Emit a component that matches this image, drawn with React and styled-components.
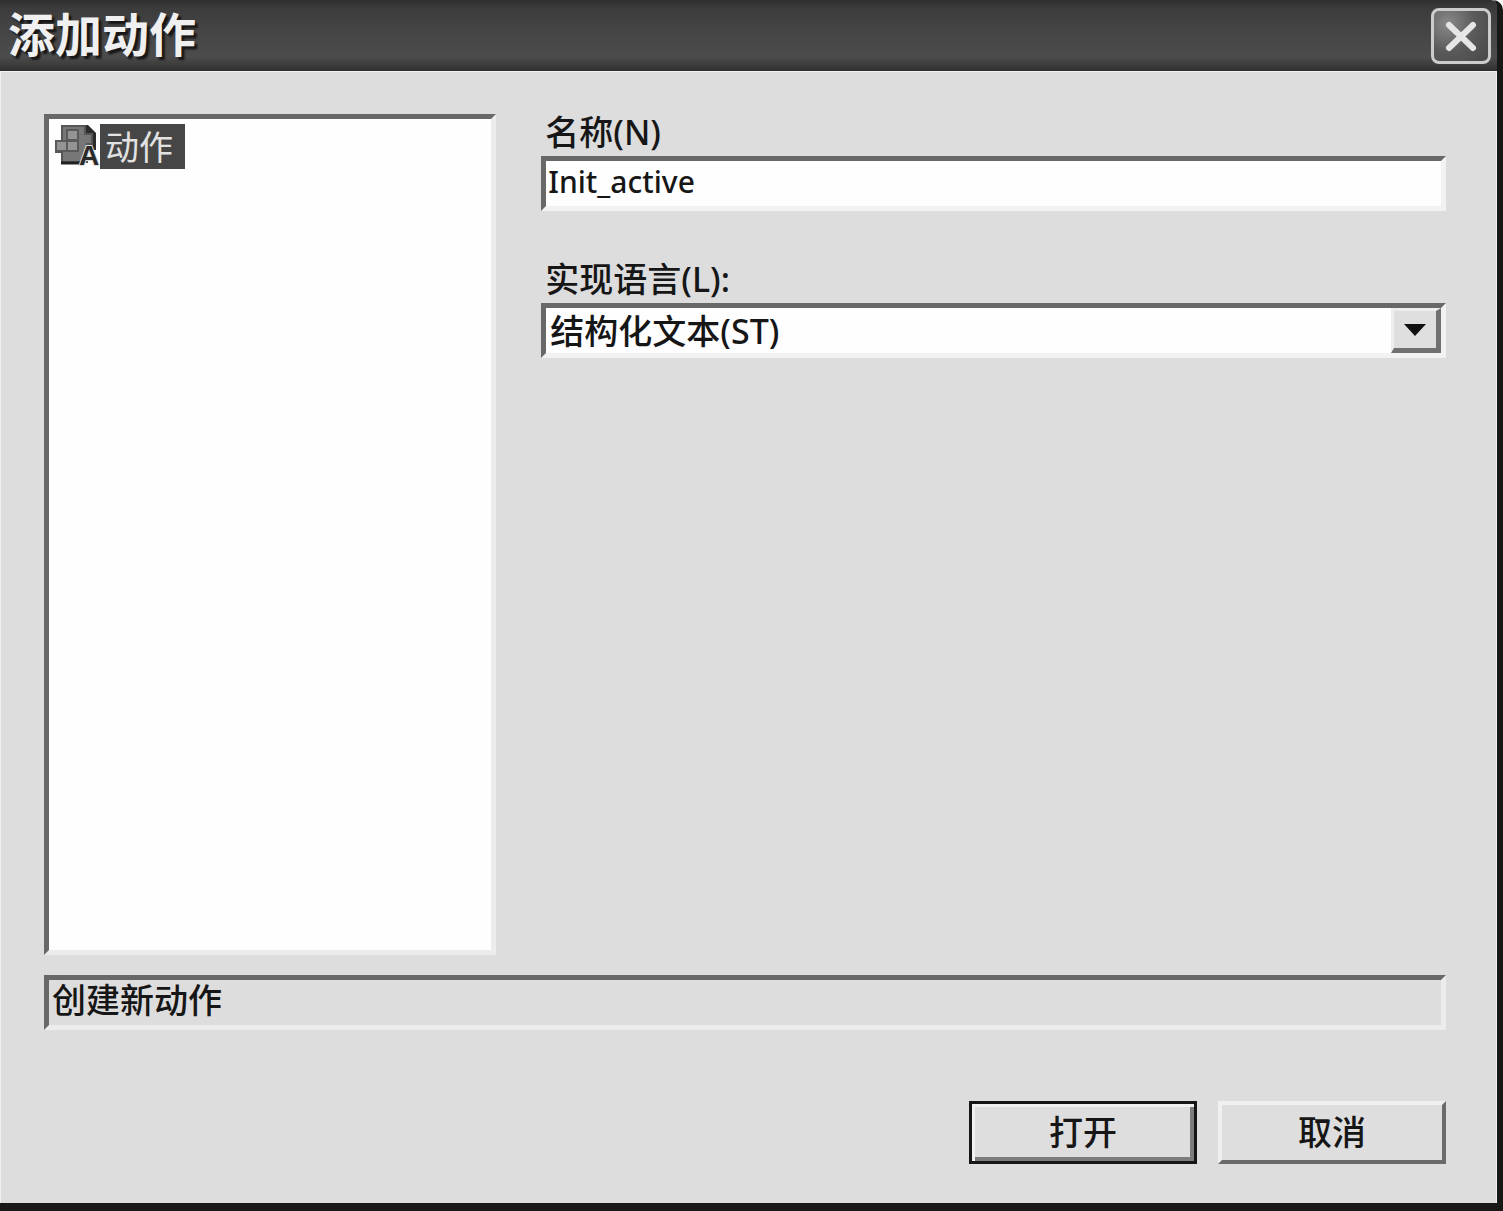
import React, {useState} from "react";
import styled, {createGlobalStyle} from "styled-components";


export default function App(){
    const [name, setName] = useState("Init_active");
    const [language, setLanguage] = useState("st");

    return(
        <>
            <GlobalStyle/>
            <Window>
                <TitleBar>
                    <h1>添加动作</h1>
                    <CloseBtn type="button" aria-label="关闭">
                        <svg width="34" height="32" viewBox="0 0 34 32" aria-hidden="true">
                            <path d="M5 5 L29 28 M29 5 L5 28" stroke="#e6e6e6" strokeWidth="6" strokeLinecap="round"/>
                        </svg>
                    </CloseBtn>
                </TitleBar>

                <Content>
                    <Main>
                        <Tree>
                            <TreeItem>
                                <ActionIcon/>
                                <TreeLabel type="button">动作</TreeLabel>
                            </TreeItem>
                        </Tree>

                        <Form>
                            <Field>
                                <label htmlFor="name">名称(N)</label>
                                <TextInput id="name" value={name} onChange={(e)=>setName(e.target.value)}/>
                            </Field>
                            <Field>
                                <label htmlFor="language">实现语言(L):</label>
                                <SelectWrap>
                                    <Select id="language" value={language} onChange={(e)=>setLanguage(e.target.value)}>
                                        <option value="st">结构化文本(ST)</option>
                                    </Select>
                                    <Arrow>
                                        <svg width="22" height="12" viewBox="0 0 22 12" aria-hidden="true">
                                            <path d="M0 0 H22 L11 12 Z" fill="#111111"/>
                                        </svg>
                                    </Arrow>
                                </SelectWrap>
                            </Field>
                        </Form>
                    </Main>

                    <Status>创建新动作</Status>

                    <ButtonRow>
                        <Button type="submit" $primary>打开</Button>
                        <Button type="button">取消</Button>
                    </ButtonRow>
                </Content>
            </Window>
        </>
    )
}

function ActionIcon(){
    return(
        <svg width="46" height="52" viewBox="0 0 46 52" aria-hidden="true">
            <path d="M31 1 H34 L42 9 V26 H37 V14 H31 Z" fill="#2b2b2b"/>
            <path d="M8 2 H31 V10 H38 V20 H33 V38 H8 V28 H2 V17 H8 Z" fill="#777777" stroke="#565656" strokeWidth="2"/>
            <path d="M7 39 H26" stroke="#222222" strokeWidth="3"/>
            <path d="M12 5 V16 H1 V28 H25 V5 Z" fill="#5a5a5a"/>
            <rect x="14" y="7" width="9" height="8" fill="#949494"/>
            <rect x="3" y="18" width="9" height="8" fill="#949494"/>
            <rect x="14" y="18" width="9" height="8" fill="#949494"/>
            <text x="35" y="41" textAnchor="middle">A</text>
        </svg>
    )
}


const GlobalStyle = createGlobalStyle`
    *{
        box-sizing: border-box;
    }
    body{
        margin: 0;
        background: #ffffff;
        color: #161616;
        font-family: "Noto Sans", "Noto Sans CJK SC", sans-serif;
        font-size: 34px;
    }
    button, input, select{
        font: inherit;
        color: inherit;
    }
`

const Window = styled.div`
    min-height: 100vh;
    display: flex;
    flex-direction: column;
    border: solid #181818;
    border-width: 0 6px 8px 0;
    border-top-right-radius: 10px;
    background: #dddddd;
`

const TitleBar = styled.header`
    height: 71px;
    padding: 0 6px 0 8px;
    display: flex;
    align-items: center;
    justify-content: space-between;
    background: linear-gradient(#303030 0%, #3c3c3c 12%, #444444 40%, #4c4c4c 80%, #303030 100%);
    border-top-right-radius: 6px;
    h1{
        margin: 0;
        padding-bottom: 4px;
        font-size: 47px;
        line-height: 64px;
        font-weight: 700;
        color: #f0f0f0;
        text-shadow: 3px 3px 2px #161616;
    }
`

const CloseBtn = styled.button`
    width: 60px;
    height: 56px;
    padding: 0;
    display: flex;
    align-items: center;
    justify-content: center;
    background: radial-gradient(circle at 25% 25%, #8a8a8a, #5a5a5a 50%, #484848);
    border: 3px solid #cccccc;
    border-radius: 8px;
`

const Content = styled.main`
    flex: 1;
    padding: 43px 51px 39px 44px;
    display: flex;
    flex-direction: column;
    box-shadow: inset 1px 1px 0 #f0f0f0, inset -1px 0 0 #f0f0f0;
`

const Main = styled.div`
    flex: 1;
    display: grid;
    grid-template-columns: 1fr 2fr;
    gap: 45px;
`

const Tree = styled.ul`
    margin: 0;
    padding: 5px;
    list-style: none;
    background: #fefefe;
    border: 5px solid;
    border-color: #686868 #ececec #ececec #686868;
`

const TreeItem = styled.li`
    display: flex;
    align-items: flex-start;
    text{
        font-family: "Liberation Sans", sans-serif;
        font-size: 28px;
        font-weight: 700;
        fill: #2a2a2a;
        stroke: #dddddd;
        stroke-width: 2px;
        paint-order: stroke;
    }
`

const TreeLabel = styled.button`
    height: 45px;
    padding: 0 12px 0 5px;
    border: none;
    background: #464646;
    && {
        color: #e2e2e2;
        line-height: 44px;
    }
`

const Form = styled.form`
    min-width: 0;
    display: flex;
    flex-direction: column;
    gap: 50px;
`

const Field = styled.div`
    display: flex;
    flex-direction: column;
    gap: 6px;
    label{
        padding-left: 4px;
        line-height: 36px;
        font-weight: 500;
    }
`

const TextInput = styled.input`
    width: 100%;
    height: 55px;
    padding: 0 0 4px 2px;
    background: #fefefe;
    border: 5px solid;
    border-color: #686868 #f2f2f2 #f2f2f2 #686868;
    border-radius: 0;
    outline: none;
    && {
        font-size: 30px;
        font-weight: 500;
    }
`

const SelectWrap = styled.div`
    position: relative;
    display: flex;
`

const Select = styled.select`
    width: 100%;
    height: 55px;
    padding: 0 50px 4px 4px;
    appearance: none;
    background: #fefefe;
    border: 5px solid;
    border-color: #686868 #f2f2f2 #f2f2f2 #686868;
    border-radius: 0;
    outline: none;
    && {
        font-weight: 500;
    }
`

const Arrow = styled.span`
    position: absolute;
    top: 5px;
    right: 5px;
    bottom: 5px;
    width: 50px;
    display: flex;
    align-items: center;
    justify-content: center;
    background: #dfdfdf;
    border: solid;
    border-width: 3px 5px 5px 3px;
    border-color: #eeeeee #707070 #707070 #eeeeee;
    pointer-events: none;
`

const Status = styled.div`
    height: 55px;
    margin-top: 20px;
    padding-left: 3px;
    line-height: 41px;
    font-weight: 500;
    border: 5px solid;
    border-color: #686868 #ececec #ececec #686868;
`

const ButtonRow = styled.div`
    margin-top: 71px;
    display: flex;
    justify-content: flex-end;
    gap: 21px;
`

const Button = styled.button`
    width: 228px;
    height: 63px;
    padding: 0 0 4px;
    background: #dedede;
    border: 4px solid;
    border-color: ${({$primary}) => $primary ? "#161616" : "#f0f0f0 #6a6a6a #6a6a6a #f0f0f0"};
    border-width: ${({$primary}) => $primary ? "3px" : "4px"};
    box-shadow: ${({$primary}) => $primary ? "inset 3px 3px 0 #f0f0f0, inset -4px -4px 0 #7c7c7c" : "none"};
    && {
        font-weight: 500;
    }
`
